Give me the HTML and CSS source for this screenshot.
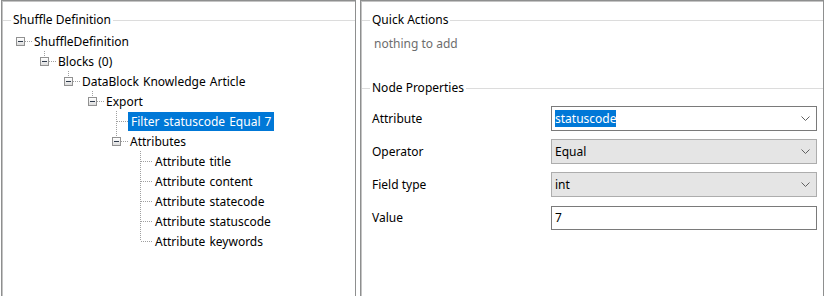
FILE: index.html
```html
<!DOCTYPE html>
<html lang="en">
<head>
    <meta charset="UTF-8">
    <title>Shuffle Definition</title>
    <link rel="stylesheet" href="styles.css">
</head>
<body>
    <div class="split">
        <div class="panel left">
            <div class="group-title"><span>Shuffle Definition</span></div>
            <div class="tree">
                <div class="node lv0 root"><i class="exp"></i><span class="label">ShuffleDefinition</span></div>
                <div class="node lv1 end"><i class="exp"></i><span class="label">Blocks (0)</span></div>
                <div class="node lv2 end"><i class="exp"></i><span class="label">DataBlock Knowledge Article</span></div>
                <div class="node lv3 end"><i class="exp"></i><span class="label">Export</span></div>
                <div class="node lv4 mid leaf"><i class="exp"></i><span class="label selected">Filter statuscode Equal 7</span></div>
                <div class="node lv4 end"><i class="exp"></i><span class="label">Attributes</span></div>
                <div class="node lv5 mid leaf"><i class="exp"></i><span class="label">Attribute title</span></div>
                <div class="node lv5 mid leaf"><i class="exp"></i><span class="label">Attribute content</span></div>
                <div class="node lv5 mid leaf"><i class="exp"></i><span class="label">Attribute statecode</span></div>
                <div class="node lv5 mid leaf"><i class="exp"></i><span class="label">Attribute statuscode</span></div>
                <div class="node lv5 end leaf"><i class="exp"></i><span class="label">Attribute keywords</span></div>
            </div>
        </div>
        <div class="panel right">
            <div class="group-title"><span>Quick Actions</span></div>
            <div class="hint">nothing to add</div>
            <div class="group-title props"><span>Node Properties</span></div>
            <div class="form">
                <label>Attribute</label>
                <div class="combo edit"><span class="sel">statuscode</span><svg class="chev" width="9" height="5" viewBox="0 0 9 5"><polyline points="0.5,0.5 4.5,4.5 8.5,0.5" fill="none" stroke="#606060" stroke-width="1"/></svg></div>
                <label>Operator</label>
                <div class="combo list"><span>Equal</span><svg class="chev" width="9" height="5" viewBox="0 0 9 5"><polyline points="0.5,0.5 4.5,4.5 8.5,0.5" fill="none" stroke="#606060" stroke-width="1"/></svg></div>
                <label>Field type</label>
                <div class="combo list"><span>int</span><svg class="chev" width="9" height="5" viewBox="0 0 9 5"><polyline points="0.5,0.5 4.5,4.5 8.5,0.5" fill="none" stroke="#606060" stroke-width="1"/></svg></div>
                <label>Value</label>
                <div class="textbox">7</div>
            </div>
        </div>
    </div>
</body>
</html>
```

FILE: styles.css
```css
body{
    margin: 0;
    padding: 0;
    background: #fff;
    font-family: "Noto Sans", "Open Sans", sans-serif;
    font-size: 12px;
    color: #000;
    overflow: hidden;
}
.split{
    display: flex;
    height: 296px;
    overflow: hidden;
}
.panel{
    height: 320px;
    border: 1px solid #8e8f8f;
    box-shadow: inset 1px 1px 0 #c4c4c4;
}
.left{
    width: 353px;
    margin-left: 1px;
}
.right{
    width: 462px;
    margin-left: 4px;
}

/* group box header */
.group-title{
    display: flex;
    align-items: center;
    height: 20px;
    margin-top: 9px;
    padding-left: 1px;
}
.group-title::before{
    content: "";
    width: 8px;
    border-top: 1px solid #dcdcdc;
}
.group-title::after{
    content: "";
    flex: 1;
    border-top: 1px solid #dcdcdc;
}
.group-title span{
    padding: 0 2px;
    line-height: 20px;
}

/* tree */
.tree{
    margin-top: 1px;
    word-spacing: 1px;
}
.node{
    --lv: 0;
    position: relative;
    display: flex;
    align-items: center;
    height: 20px;
    padding-left: calc(14px + var(--lv) * 24px);
}
.lv1{ --lv: 1; }
.lv2{ --lv: 2; }
.lv3{ --lv: 3; }
.lv4{ --lv: 4; }
.lv5{ --lv: 5; }
.node::before{
    content: "";
    position: absolute;
    left: calc(18px + var(--lv) * 24px);
    top: 0;
    width: 1px;
    background: linear-gradient(to bottom, #a0a0a0 50%, transparent 50%) 0 0 / 1px 2px;
}
.node.mid::before{ height: 100%; }
.node.end::before{ height: 10px; }
.node.root::before{ display: none; }
.node::after{
    content: "";
    position: absolute;
    left: calc(18px + var(--lv) * 24px);
    top: 10px;
    width: 12px;
    height: 1px;
    background: linear-gradient(to right, #a0a0a0 50%, transparent 50%) 1px 0 / 2px 1px;
}
.exp{
    position: relative;
    z-index: 1;
    width: 7px;
    height: 7px;
    border: 1px solid #919191;
    background: linear-gradient(#fff, #dcdcdc);
    margin-top: 1px;
}
.exp::after{
    content: "";
    position: absolute;
    left: 1px;
    top: 3px;
    width: 5px;
    height: 1px;
    background: #2e3a4b;
}
.leaf .exp{
    visibility: hidden;
}
.label{
    position: relative;
    z-index: 1;
    margin-left: 7px;
    padding: 0 2px;
    line-height: 19px;
    white-space: nowrap;
}
.leaf .label{
    padding: 0 3px;
}
.selected{
    background: #0078d7;
    color: #fff;
}

/* right side */
.hint{
    color: #6d6d6d;
    padding-left: 13px;
    margin-top: 4px;
    line-height: 20px;
}
.group-title.props{
    margin-top: 24px;
}
.form{
    display: grid;
    grid-template-columns: 179px 266px;
    grid-auto-rows: 25px;
    row-gap: 8px;
    align-items: center;
    padding-left: 11px;
    margin-top: 8px;
}
.form label{
    line-height: 20px;
}
.combo, .textbox{
    box-sizing: border-box;
    height: 25px;
    display: flex;
    align-items: center;
    padding-left: 3px;
    border: 1px solid #7a7a7a;
    background: #fff;
}
.combo span{
    flex: 1;
}
.combo .sel{
    flex: none;
    background: #0078d7;
    color: #fff;
    margin-right: auto;
    line-height: 17px;
}
.combo.list{
    background: #e5e5e5;
    border-color: #adadad;
}
.chev{
    margin-right: 6px;
}
.textbox{
    height: 24px;
}
```
